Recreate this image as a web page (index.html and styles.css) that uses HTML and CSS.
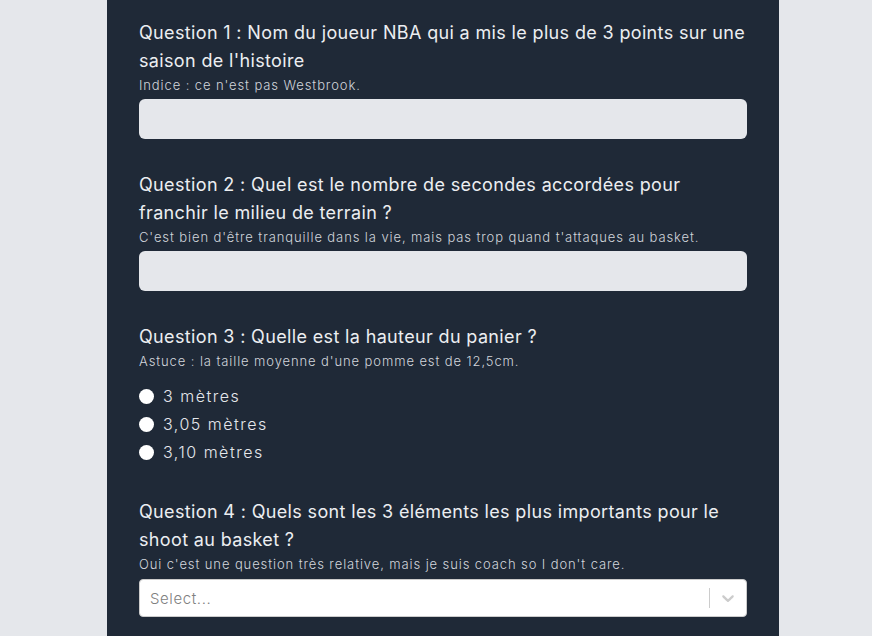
FILE: index.html
```html
<!DOCTYPE html>
<html lang="fr">
<head>
<meta charset="utf-8">
<title>Quiz basket</title>
<link rel="stylesheet" href="styles.css">
</head>
<body>
<main class="panel">
  <section class="question">
    <h2 class="q-title">Question 1 : Nom du joueur NBA qui a mis le plus de 3 points sur une saison de l'histoire</h2>
    <p class="q-hint">Indice : ce n'est pas Westbrook.</p>
    <input class="text-input" type="text">
  </section>
  <section class="question">
    <h2 class="q-title">Question 2 : Quel est le nombre de secondes accordées pour franchir le milieu de terrain ?</h2>
    <p class="q-hint">C'est bien d'être tranquille dans la vie, mais pas trop quand t'attaques au basket.</p>
    <input class="text-input" type="text">
  </section>
  <section class="question">
    <h2 class="q-title">Question 3 : Quelle est la hauteur du panier ?</h2>
    <p class="q-hint">Astuce : la taille moyenne d'une pomme est de 12,5cm.</p>
    <div class="radios">
      <label class="radio"><input type="radio" name="q3"><span>3 mètres</span></label>
      <label class="radio"><input type="radio" name="q3"><span>3,05 mètres</span></label>
      <label class="radio"><input type="radio" name="q3"><span>3,10 mètres</span></label>
    </div>
  </section>
  <section class="question">
    <h2 class="q-title">Question 4 : Quels sont les 3 éléments les plus importants pour le shoot au basket ?</h2>
    <p class="q-hint">Oui c'est une question très relative, mais je suis coach so I don't care.</p>
    <div class="select">
      <div class="select-value">Select...</div>
      <div class="select-indicators">
        <span class="select-sep"></span>
        <span class="select-arrow">
          <svg width="20" height="20" viewBox="0 0 20 20"><path fill="#cccccc" d="M4.516 7.548c0.436-0.446 1.043-0.481 1.576 0l3.908 3.747 3.908-3.747c0.533-0.481 1.141-0.446 1.574 0 0.436 0.445 0.408 1.197 0 1.615-0.406 0.418-4.695 4.502-4.695 4.502-0.217 0.223-0.502 0.335-0.787 0.335s-0.57-0.112-0.789-0.335c0 0-4.287-4.084-4.695-4.502s-0.436-1.170 0-1.615z"/></svg>
        </span>
      </div>
    </div>
  </section>
</main>
</body>
</html>
```
FILE: styles.css
```css
* { box-sizing: border-box; }
html, body { margin: 0; padding: 0; }
body {
  background: #e5e7eb;
  font-family: "Inter", "Lato", sans-serif;
  min-height: 636px;
  overflow: hidden;
}
.panel {
  width: 672px;
  margin: 0 93px 0 107px;
  background: #1f2937;
  min-height: 636px;
  padding: 19px 32px 0 32px;
  display: flex;
  flex-direction: column;
  gap: 32px;
}
.question { display: flex; flex-direction: column; }
.q-title {
  margin: 0;
  font-size: 18px;
  line-height: 28px;
  font-weight: 400;
  color: #eceef1;
  letter-spacing: 0.35px;
}
.q-hint {
  margin: 0 0 4px 0;
  font-size: 13px;
  line-height: 20px;
  color: #d1d5db;
  letter-spacing: 0.9px;
  font-weight: 300;
}
.text-input {
  display: block;
  width: 100%;
  height: 40px;
  border: none;
  border-radius: 6px;
  background: #e5e7eb;
  margin: 0;
}
.radios { display: flex; flex-direction: column; padding-top: 7px; }
.radio {
  display: flex;
  align-items: center;
  height: 28px;
  gap: 9px;
  font-size: 16px;
  color: #e5e7eb;
  letter-spacing: 1.5px;
  font-weight: 300;
}
.radio input {
  appearance: none;
  -webkit-appearance: none;
  width: 15px;
  height: 15px;
  border-radius: 50%;
  background: #ffffff;
  margin: 0;
}
.select {
  display: flex;
  align-items: center;
  height: 38px;
  background: #ffffff;
  border: 1px solid #cccccc;
  border-radius: 4px;
  margin-top: 1px;
}
.select-value {
  flex: 1;
  padding: 0 10px;
  color: #808080;
  font-size: 15px;
  letter-spacing: 0.6px;
  font-weight: 300;
}
.select-indicators { display: flex; align-items: center; align-self: stretch; }
.select-sep {
  width: 1px;
  align-self: stretch;
  margin: 8px 0;
  background: #cccccc;
}
.select-arrow { display: flex; padding: 8px; }
```
